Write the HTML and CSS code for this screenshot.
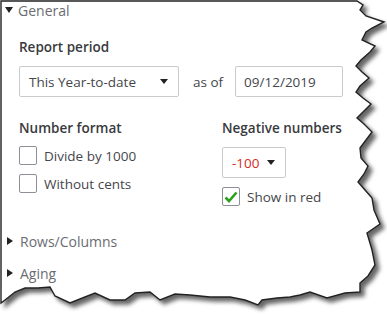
FILE: index.html
```html
<!DOCTYPE html>
<html lang="en">
<head>
  <meta charset="UTF-8" />
  <title>Report settings</title>
  <link rel="stylesheet" href="styles.css">
</head>
<body>
  <svg class="paper" width="387" height="314" viewBox="0 0 387 314">
    <defs>
      <filter id="torn-shadow" x="-10%" y="-10%" width="130%" height="130%">
        <feDropShadow dx="4" dy="4" stdDeviation="2.2" flood-color="#000" flood-opacity="0.6"/>
      </filter>
    </defs>
    <path class="paper-edge" filter="url(#torn-shadow)"
      d="M1,1 L357,1 L363,5 L360,10 L366,16 L384,22 L372,28 L366,32 L362,40 L375,46 L370,52 L361,60 L356,66 L362,72 L369,78 L360,86 L356,92 L363,98 L371,104 L363,112 L357,118 L364,124 L372,132 L366,140 L360,148 L361,158 L368,166 L364,174 L358,182 L365,190 L372,198 L374,210 L380,224 L367,233 L372,250 L375,265 L368,276 L360,283 L360,292 L345,293 L327,298 L310,292 L300,295 L290,297 L277,298 L262,300 L258,305 L245,300 L230,297 L210,297 L190,295 L175,294 L160,300 L150,292 L135,293 L125,300 L110,300 L95,293 L85,297 L70,303 L55,296 L50,287 L38,288 L25,288 L15,292 L5,300 L1,303 Z"/>
  </svg>

  <div class="panel">
    <div class="toggle open">General</div>

    <div class="general">
      <h3 class="label">Report period</h3>
      <div class="period-row">
        <div class="select wide">
          <span>This Year-to-date</span>
          <span class="caret"></span>
        </div>
        <span class="as-of">as of</span>
        <div class="date-input">09/12/2019</div>
      </div>

      <div class="columns">
        <div class="col number-format">
          <h3 class="label">Number format</h3>
          <div class="check-row">
            <span class="checkbox"></span>
            <span>Divide by 1000</span>
          </div>
          <div class="check-row">
            <span class="checkbox"></span>
            <span>Without cents</span>
          </div>
        </div>
        <div class="col">
          <h3 class="label">Negative numbers</h3>
          <div class="select narrow">
            <span class="negative">-100</span>
            <span class="caret"></span>
          </div>
          <div class="check-row">
            <span class="checkbox checked">
              <svg width="14" height="12" viewBox="0 0 14 12"><path d="M1.5,6.5 L5,10 L12.5,1.5" fill="none" stroke="#2ca01c" stroke-width="2.6"/></svg>
            </span>
            <span>Show in red</span>
          </div>
        </div>
      </div>
    </div>

    <div class="toggle closed rows">Rows/Columns</div>
    <div class="toggle closed aging">Aging</div>
  </div>
</body>
</html>
```

FILE: styles.css
```css
body {
  margin: 0;
  width: 387px;
  height: 314px;
  background: #fff;
  font-family: "Open Sans", Lato, sans-serif;
  font-size: 13.5px;
  color: #45464b;
  position: relative;
  overflow: hidden;
}
.paper {
  position: absolute;
  left: 0;
  top: 0;
}
.paper-edge {
  fill: #fff;
  stroke: #222;
  stroke-width: 1.4;
}
.panel {
  position: relative;
  padding: 1px 0 0 5px;
}
.toggle {
  display: flex;
  align-items: center;
  gap: 5px;
  color: #6b6c72;
  font-size: 14px;
  height: 18px;
}
.toggle::before {
  content: "";
  display: inline-block;
  width: 0;
  height: 0;
}
.toggle.open::before {
  border-left: 4.5px solid transparent;
  border-right: 4.5px solid transparent;
  border-top: 6px solid #222;
}
.toggle.closed::before {
  margin-left: 2px;
  border-top: 4.5px solid transparent;
  border-bottom: 4.5px solid transparent;
  border-left: 6px solid #222;
  margin-right: 2px;
}
.general {
  padding-left: 14px;
}
.label {
  margin: 0;
  font-size: 13.5px;
  font-weight: 600;
  color: #393a3d;
}
.general > .label {
  margin-top: 19px;
}
.period-row {
  display: flex;
  align-items: center;
  margin-top: 10px;
}
.select {
  display: flex;
  align-items: center;
  justify-content: space-between;
  box-sizing: border-box;
  height: 31px;
  border: 1px solid #c9cacc;
  border-radius: 2px;
  padding: 0 10px 0 9px;
}
.select.wide {
  width: 160px;
}
.select.narrow {
  width: 64px;
  margin-top: 10px;
}
.caret {
  width: 0;
  height: 0;
  border-left: 4px solid transparent;
  border-right: 4px solid transparent;
  border-top: 5px solid #222;
}
.as-of {
  margin: 0 12px 0 14px;
}
.date-input {
  box-sizing: border-box;
  width: 108px;
  height: 31px;
  border: 1px solid #c9cacc;
  border-radius: 2px;
  padding: 0 8px;
  display: flex;
  align-items: center;
}
.columns {
  display: flex;
  margin-top: 22px;
}
.number-format {
  width: 203px;
}
.check-row {
  display: flex;
  align-items: center;
  gap: 7px;
  margin-top: 9px;
}
.number-format .check-row + .check-row {
  margin-top: 9px;
}
.checkbox {
  box-sizing: border-box;
  width: 18px;
  height: 19px;
  border: 1px solid #8d9096;
  border-radius: 2px;
  display: flex;
  align-items: center;
  justify-content: center;
}
.negative {
  color: #d52b1e;
}
.toggle.rows {
  margin-top: 26px;
}
.toggle.aging {
  margin-top: 14px;
}
```
